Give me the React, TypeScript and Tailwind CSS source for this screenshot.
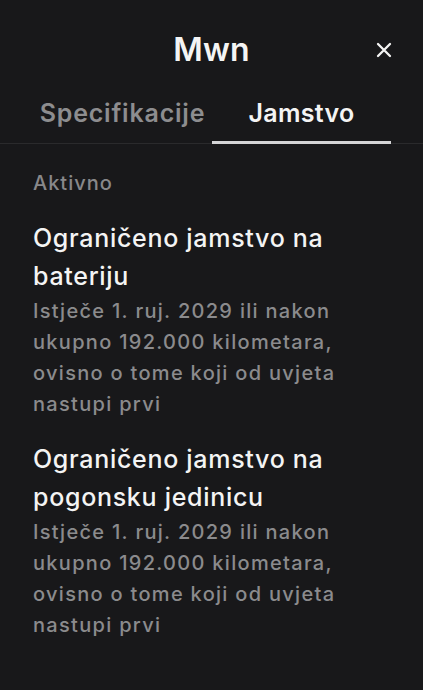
import React, { useState } from "react";

interface Warranty {
  id: string;
  title: string;
  expiry: string;
}

const warranties: Warranty[] = [
  {
    id: "battery",
    title: "Ograničeno jamstvo na bateriju",
    expiry: "Istječe 1. ruj. 2029 ili nakon ukupno 192.000 kilometara, ovisno o tome koji od uvjeta nastupi prvi",
  },
  {
    id: "drive-unit",
    title: "Ograničeno jamstvo na pogonsku jedinicu",
    expiry: "Istječe 1. ruj. 2029 ili nakon ukupno 192.000 kilometara, ovisno o tome koji od uvjeta nastupi prvi",
  },
];

const tabs = ["Specifikacije", "Jamstvo"];

const App: React.FC = () => {
  const [activeTab, setActiveTab] = useState("Jamstvo");

  return (
    <div className="w-[423px] h-[690px] overflow-hidden bg-[#18181a] font-['Inter',sans-serif] antialiased">
      {/* header */}
      <div className="relative h-[97px] flex items-center justify-center pt-[3px]">
        <h1 className="text-[32px] font-semibold text-[#f4f4f4] leading-none tracking-[0.2px]">Mwn</h1>
        <button className="absolute right-[29px] top-[40px] w-[20px] h-[20px] flex items-center justify-center">
          <svg width="16" height="16" viewBox="0 0 16 16" fill="none">
            <path d="M2 2L14 14M14 2L2 14" stroke="#f4f4f4" strokeWidth="2.3" strokeLinecap="round" />
          </svg>
        </button>
      </div>

      {/* tabs */}
      <div className="border-b border-[#2a2a2c]">
        <div className="grid grid-cols-2 pl-[33px] pr-[32px]">
          {tabs.map((tab) => (
            <button
              key={tab}
              onClick={() => setActiveTab(tab)}
              className={
                tab === activeTab
                  ? "text-[25px] font-semibold leading-[32px] tracking-[0.3px] pb-[12px] text-[#f4f4f4] border-b-[3px] border-[#d4d4d6] -mb-px"
                  : "text-[25px] font-semibold leading-[32px] tracking-[0.8px] pb-[12px] text-[#8d8d8f] border-b-[3px] border-transparent -mb-px"
              }
            >
              {tab}
            </button>
          ))}
        </div>
      </div>

      {/* content */}
      <div className="pl-[33px] pr-[20px] pt-[27px]">
        <div className="text-[20px] font-medium text-[#88888a] leading-[24px] tracking-[1px]">Aktivno</div>
        <div className="flex flex-col gap-[20px] mt-[24px]">
          {warranties.map((w) => (
            <div key={w.id}>
              <h2 className="text-[25px] font-medium text-[#f4f4f4] leading-[38px] tracking-[0.7px] pr-[40px]">{w.title}</h2>
              <p className="text-[20px] font-medium text-[#8b8b8d] leading-[31px] mt-[1px] tracking-[1.3px] pr-[40px]">{w.expiry}</p>
            </div>
          ))}
        </div>
      </div>
    </div>
  );
};

export default App;
